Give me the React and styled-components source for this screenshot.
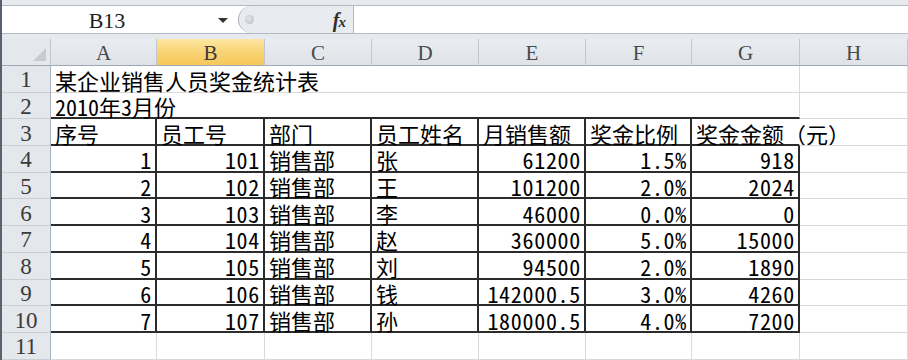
import { Fragment } from "react";
import styled, { createGlobalStyle } from "styled-components";

const FONT = `"Noto Sans Mono CJK SC", "Liberation Mono", "Noto Sans CJK SC", monospace`;
const HEAD_FONT = `"Liberation Serif", "Noto Sans CJK SC", serif`;

const GlobalStyle = createGlobalStyle`
  html, body {
    margin: 0;
    padding: 0;
    background: #fff;
  }
  body {
    width: 908px;
    height: 360px;
    overflow: hidden;
  }
`;

const Window = styled.div`
  width: 908px;
  height: 360px;
  box-sizing: border-box;
  border-left: 2px solid #58616e;
  display: flex;
  flex-direction: column;
  font-family: ${FONT};
  background: #fff;
  overflow: hidden;
`;

const TopStrip = styled.div`
  height: 5px;
  background: #e6e9ee;
  border-bottom: 1px solid #b4bbc5;
`;

const FormulaBar = styled.div`
  display: flex;
  height: 27px;
  border-bottom: 1px solid #b4bbc5;
`;

const NameBox = styled.div`
  width: 236px;
  display: flex;
  align-items: center;
  background: #fff;
`;

const NameText = styled.div`
  width: 210px;
  padding-top: 2px;
  text-align: center;
  font-family: ${HEAD_FONT};
  font-size: 22px;
  line-height: 1;
  color: #1e1e1e;
`;

const DropArrow = styled.div`
  width: 0;
  height: 0;
  margin: 2px 0 0 6px;
  border-left: 5px solid transparent;
  border-right: 5px solid transparent;
  border-top: 5px solid #333;
`;

const BarMiddle = styled.div`
  width: 114px;
  display: flex;
  align-items: center;
  background: #e8ebef;
  border-left: 1px solid #a9b1bb;
  border-radius: 14px 0 0 14px;
`;

const Grip = styled.div`
  width: 9px;
  height: 9px;
  margin-left: 6px;
  border-radius: 50%;
  background: radial-gradient(circle at 40% 40%, #e2e5e9, #b6bcc4);
`;

const FxLabel = styled.div`
  margin-left: auto;
  margin-right: 7px;
  font-family: "Liberation Serif", serif;
  font-style: italic;
  font-weight: bold;
  font-size: 20px;
  line-height: 1;
  color: #2e2e2e;
  span {
    font-size: 15px;
    margin-left: -1px;
  }
`;

const FormulaInput = styled.div`
  flex: 1;
  background: #fff;
  border-left: 1px solid #b4bbc5;
`;

const Gap = styled.div`
  height: 5px;
  background: #e6e9ee;
`;

const Sheet = styled.div`
  flex: 1;
  display: grid;
  grid-template-columns: 49px 106px 108px 107px 107px 107px 106px 108px 108px;
  grid-template-rows: 27px repeat(10, 26.7px) 1fr;
`;

const Corner = styled.div`
  display: flex;
  align-items: flex-end;
  justify-content: flex-end;
  padding: 0 4px 4px 0;
  background: #e4e7eb;
  border-right: 1px solid #c2c7ce;
  border-bottom: 1px solid #9ea7b2;
  box-sizing: border-box;
`;

const CornerMark = styled.div`
  width: 0;
  height: 0;
  border-left: 13px solid transparent;
  border-bottom: 13px solid #c6cbd2;
`;

const ColHead = styled.div`
  display: flex;
  align-items: center;
  justify-content: center;
  padding-top: 2px;
  box-sizing: border-box;
  font-family: ${HEAD_FONT};
  font-size: 21px;
  line-height: 1;
  color: ${(p) => (p.$active ? "#3a3a3a" : "#4a4a4a")};
  background: ${(p) =>
    p.$active
      ? "linear-gradient(#fde7a4, #f9d271 55%, #f6c85a)"
      : "linear-gradient(#e9ecf0, #dfe3e8)"};
  border-right: 1px solid #c2c7ce;
  border-bottom: 1px solid #9ea7b2;
`;

const RowHead = styled.div`
  display: flex;
  align-items: center;
  justify-content: center;
  padding-top: 2px;
  box-sizing: border-box;
  font-family: ${HEAD_FONT};
  font-size: 23px;
  line-height: 1;
  color: #3a3a3a;
  background: #e4e7eb;
  border-right: 1px solid #a9b1bb;
  border-bottom: 1px solid #c9ced5;
`;

const Cell = styled.div`
  grid-column: span ${(p) => p.$span || 1};
  display: flex;
  align-items: center;
  justify-content: ${(p) => (p.$right ? "flex-end" : "flex-start")};
  padding: 2px ${(p) => (p.$right ? "3px" : "4px")} 0 4px;
  box-sizing: border-box;
  font-size: 22px;
  line-height: 1;
  letter-spacing: ${(p) => (p.$right ? "0.7px" : "0")};
  color: #000;
  white-space: nowrap;
  min-width: 0;
  border-right: ${(p) =>
    p.$edge === "dark"
      ? "2px solid #2b2b2b"
      : p.$edge === "none"
      ? "1px solid transparent"
      : "1px solid #d9d9d9"};
  border-bottom: ${(p) =>
    p.$floor === "dark" ? "2px solid #2b2b2b" : "1px solid #d9d9d9"};
`;

const COLS = ["A", "B", "C", "D", "E", "F", "G", "H"];

const titles = ["某企业销售人员奖金统计表", "2010年3月份"];

const rows = [
  ["序号", "员工号", "部门", "员工姓名", "月销售额", "奖金比例", "奖金金额（元）"],
  ["1", "101", "销售部", "张", "61200", "1.5%", "918"],
  ["2", "102", "销售部", "王", "101200", "2.0%", "2024"],
  ["3", "103", "销售部", "李", "46000", "0.0%", "0"],
  ["4", "104", "销售部", "赵", "360000", "5.0%", "15000"],
  ["5", "105", "销售部", "刘", "94500", "2.0%", "1890"],
  ["6", "106", "销售部", "钱", "142000.5", "3.0%", "4260"],
  ["7", "107", "销售部", "孙", "180000.5", "4.0%", "7200"],
];

const rightCols = [0, 1, 4, 5, 6];

// r: sheet row number, c: column index (0 = A)
function cellProps(r, c) {
  if (c === 7) return { $edge: "light", $floor: "light" };
  if (r === 11) return { $edge: "light", $floor: "light" };
  return {
    $edge: r === 3 && c === 6 ? "none" : "dark",
    $floor: "dark",
    $right: r >= 4 && rightCols.includes(c),
  };
}

export default function App() {
  return (
    <Window>
      <GlobalStyle />
      <TopStrip />
      <FormulaBar>
        <NameBox>
          <NameText>B13</NameText>
          <DropArrow />
        </NameBox>
        <BarMiddle>
          <Grip />
          <FxLabel>
            f<span>x</span>
          </FxLabel>
        </BarMiddle>
        <FormulaInput />
      </FormulaBar>
      <Gap />
      <Sheet>
        <Corner>
          <CornerMark />
        </Corner>
        {COLS.map((c) => (
          <ColHead key={c} $active={c === "B"}>
            {c}
          </ColHead>
        ))}

        {titles.map((text, i) => (
          <Fragment key={`t${i}`}>
            <RowHead>{i + 1}</RowHead>
            <Cell $span={7} $edge="light" $floor={i === 1 ? "dark" : "light"}>
              {text}
            </Cell>
            <Cell $edge="light" $floor="light" />
          </Fragment>
        ))}

        {rows.map((row, i) => (
          <Fragment key={`r${i}`}>
            <RowHead>{i + 3}</RowHead>
            {COLS.map((_, c) => (
              <Cell key={c} {...cellProps(i + 3, c)}>
                {row[c] || ""}
              </Cell>
            ))}
          </Fragment>
        ))}

        <RowHead>11</RowHead>
        {COLS.map((_, c) => (
          <Cell key={`e${c}`} {...cellProps(11, c)} />
        ))}
      </Sheet>
    </Window>
  );
}
